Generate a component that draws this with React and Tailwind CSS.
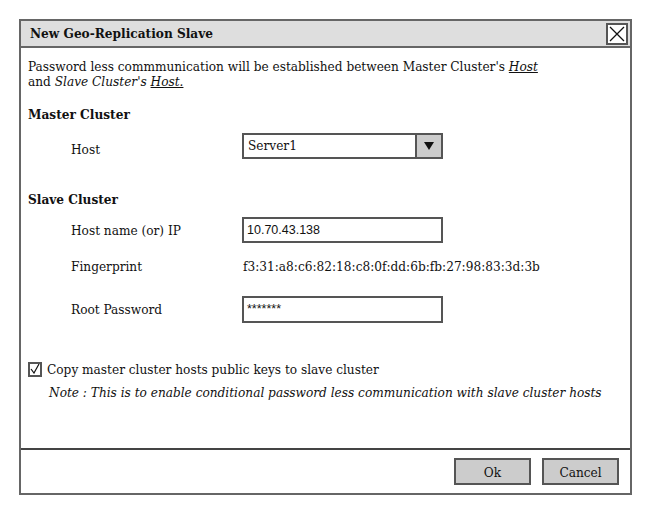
import React from "react";

const serif = { fontFamily: '"DejaVu Serif Condensed", "DejaVu Serif", serif' };

export default function App() {
  return (
    <div className="w-[653px] h-[515px] bg-white pt-[19px] pl-[19px]" style={serif}>
      <div className="w-[613px] h-[476px] border-2 border-[#666] flex flex-col text-[13.5px] text-[#111]">
        <div className="h-[27px] bg-[#dedede] border-b-2 border-[#666] flex items-center justify-between pl-[9px] pr-[2px]">
          <span className="font-bold text-[13.5px]">New Geo-Replication Slave</span>
          <div className="w-[22px] h-[22px] border-2 border-[#555] bg-white flex items-center justify-center">
            <svg width="16" height="16" viewBox="0 0 16 16">
              <path d="M1 1L15 15M15 1L1 15" stroke="#111" strokeWidth="1.3" />
            </svg>
          </div>
        </div>
        <div className="flex-1 flex flex-col pl-[7px]">
          <div className="mt-[11px] leading-[15px]">
            <div>
              Password less commmunication will be established between Master Cluster's <i className="underline">Host</i>
            </div>
            <div>
              and <i>Slave Cluster's</i> <i className="underline">Host.</i>
            </div>
          </div>
          <div className="mt-[17px] font-bold h-[16px] leading-[16px]">Master Cluster</div>
          <div className="mt-[11px] flex items-center h-[26px]">
            <div className="w-[214px] pl-[43px] pt-[6px]">Host</div>
            <div className="w-[201px] h-[26px] border-2 border-[#555] flex">
              <div className="flex-1 pl-[4px] leading-[20px]">Server1</div>
              <div className="w-[26px] bg-[#cccccc] border-l-2 border-[#555] flex items-center justify-center">
                <svg width="10" height="8" viewBox="0 0 10 8">
                  <path d="M0 0H10L5 8Z" fill="#111" />
                </svg>
              </div>
            </div>
          </div>
          <div className="mt-[32px] font-bold h-[16px] leading-[16px]">Slave Cluster</div>
          <div className="mt-[10px] flex items-center h-[26px]">
            <div className="w-[214px] pl-[43px]">Host name (or) IP</div>
            <div
              className="w-[201px] h-[26px] border-2 border-[#555] pl-[3px] leading-[22px] text-[12.5px]"
              style={{ fontFamily: '"Liberation Sans", Arial, sans-serif' }}
            >
              10.70.43.138
            </div>
          </div>
          <div className="mt-[11px] flex items-center h-[24px]">
            <div className="w-[214px] pl-[43px]">Fingerprint</div>
            <div className="pl-[1px]">f3:31:a8:c6:82:18:c8:0f:dd:6b:fb:27:98:83:3d:3b</div>
          </div>
          <div className="mt-[18px] flex items-center h-[27px]">
            <div className="w-[214px] pl-[43px]">Root Password</div>
            <div
              className="w-[201px] h-[27px] border-2 border-[#555] pl-[3px] leading-[23px] text-[12.5px]"
              style={{ fontFamily: '"Liberation Sans", Arial, sans-serif' }}
            >
              *******
            </div>
          </div>
          <div className="mt-[38px] flex items-center h-[16px]">
            <div className="w-[14px] h-[15px] border-2 border-[#555] flex items-center justify-center mr-[5px]">
              <svg width="10" height="10" viewBox="0 0 10 10">
                <path d="M1 5L4 9L9 0" stroke="#111" strokeWidth="1.2" fill="none" />
              </svg>
            </div>
            <span>Copy master cluster hosts public keys to slave cluster</span>
          </div>
          <div className="mt-[7px] pl-[21px] italic h-[16px] leading-[16px]">
            Note : This is to enable conditional password less communication with slave cluster hosts
          </div>
        </div>
        <div className="h-[45px] border-t-2 border-[#444] flex items-center justify-end gap-[11px] pr-[11px]">
          <div className="w-[77px] h-[27px] bg-[#cccccc] border-2 border-[#555] flex items-center justify-center pt-[2px]">Ok</div>
          <div className="w-[77px] h-[27px] bg-[#cccccc] border-2 border-[#555] flex items-center justify-center pt-[2px]">Cancel</div>
        </div>
      </div>
    </div>
  );
}
